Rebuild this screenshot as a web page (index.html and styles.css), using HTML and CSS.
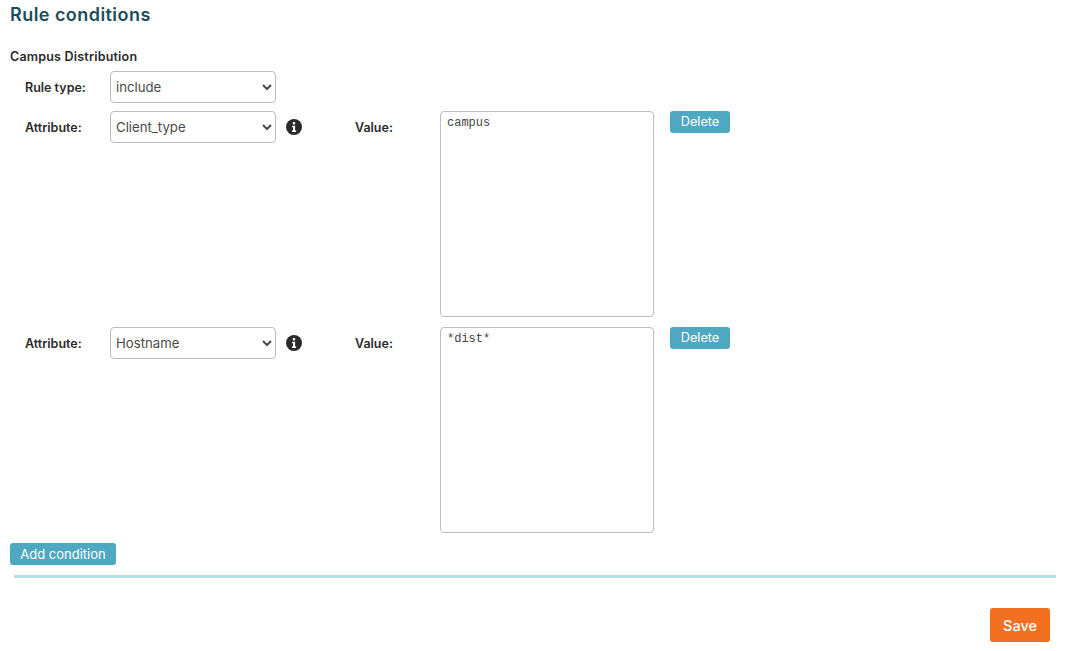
FILE: index.html
```html
<!DOCTYPE html>
<html lang="en">
<head>
<meta charset="utf-8">
<title>Rule conditions</title>
<link rel="stylesheet" href="styles.css">
</head>
<body>
<main class="page">
  <h2 class="title">Rule conditions</h2>
  <h3 class="subtitle">Campus Distribution</h3>
  <div class="rows">
    <div class="row">
      <label class="label">Rule type:</label>
      <select class="select"><option>include</option></select>
    </div>
    <div class="row condition">
      <label class="label">Attribute:</label>
      <select class="select"><option>Client_type</option></select>
      <svg class="info" viewBox="0 0 16 16" aria-hidden="true"><circle cx="8" cy="8" r="8"/><path class="info-i" d="M8 2.9a1.35 1.35 0 1 1 0 2.7a1.35 1.35 0 0 1 0-2.7zM6.2 6.7h2.9v4.9h1v1.5H6v-1.5h1V8.2h-.8z"/></svg>
      <label class="label value-label">Value:</label>
      <textarea class="textarea" spellcheck="false">campus</textarea>
      <button class="btn btn-delete">Delete</button>
    </div>
    <div class="row condition">
      <label class="label">Attribute:</label>
      <select class="select"><option>Hostname</option></select>
      <svg class="info" viewBox="0 0 16 16" aria-hidden="true"><circle cx="8" cy="8" r="8"/><path class="info-i" d="M8 2.9a1.35 1.35 0 1 1 0 2.7a1.35 1.35 0 0 1 0-2.7zM6.2 6.7h2.9v4.9h1v1.5H6v-1.5h1V8.2h-.8z"/></svg>
      <label class="label value-label">Value:</label>
      <textarea class="textarea" spellcheck="false">*dist*</textarea>
      <button class="btn btn-delete">Delete</button>
    </div>
  </div>
  <button class="btn btn-add">Add condition</button>
  <hr class="divider">
  <div class="actions"><button class="btn-save">Save</button></div>
</main>
</body>
</html>
```
FILE: styles.css
```css
* { box-sizing: border-box; }
html, body { margin: 0; background: #fff; }
body { font-family: "Inter", "Noto Sans", sans-serif; color: #2b2b2b; overflow: hidden; }
.page { padding: 5px 10px 0; width: 1066px; height: 651px; }
.title { margin: 0; font-size: 18px; line-height: 20px; font-weight: 600; letter-spacing: .45px; color: #1b4d5c; }
.subtitle { margin: 22px 0 0; font-size: 12.5px; line-height: 20px; font-weight: 600; letter-spacing: .2px; color: #2b2b2b; }
.rows { display: flex; flex-direction: column; gap: 8px; padding-left: 15px; margin-top: 4px; }
.row { display: flex; align-items: flex-start; }
.condition + .condition { margin-top: 2px; }
.label { width: 85px; height: 32px; flex: none; padding-top: 1px; font-size: 12.5px; font-weight: 600; line-height: 32px; }
.select {
  width: 166px; height: 32px; flex: none; padding: 0 0 0 1px;
  font: 400 13.2px "Inter", sans-serif; color: #4a4a4a; background: #fff;
  border: 1px solid #bdbdbd; border-radius: 4px;
}
.info { width: 16px; height: 16px; flex: none; margin: 8px 0 0 10px; }
.info circle { fill: #2b2b2b; }
.info-i { fill: #fff; }
.value-label { width: 85px; margin-left: 53px; }
.textarea {
  width: 214px; height: 206px; flex: none; padding: 5px 6px; resize: none;
  font: 400 12px/1.15 "Liberation Mono", monospace; color: #444;
  border: 1px solid #bdbdbd; border-radius: 4px; outline: none;
}
.btn {
  border: 0; border-radius: 3px; background: #4fa8c2; color: #fff; cursor: pointer;
  font: 400 12.7px "Inter", sans-serif; height: 22px; padding: 0 0 1px;
}
.btn-delete { width: 60px; margin-left: 16px; flex: none; }
.btn-add { display: block; width: 106px; margin-top: 10px; font-size: 13px; }
.divider { margin: 10px 0 0 4px; width: 1042px; height: 3px; border: 0; background: #bbdde6; }
.actions { display: flex; justify-content: flex-end; padding: 30px 6px 0 0; }
.btn-save {
  width: 60px; height: 34px; border: 0; border-radius: 3px; background: #f37021; color: #fff;
  font: 500 14.5px "Inter", sans-serif; cursor: pointer;
}
```
